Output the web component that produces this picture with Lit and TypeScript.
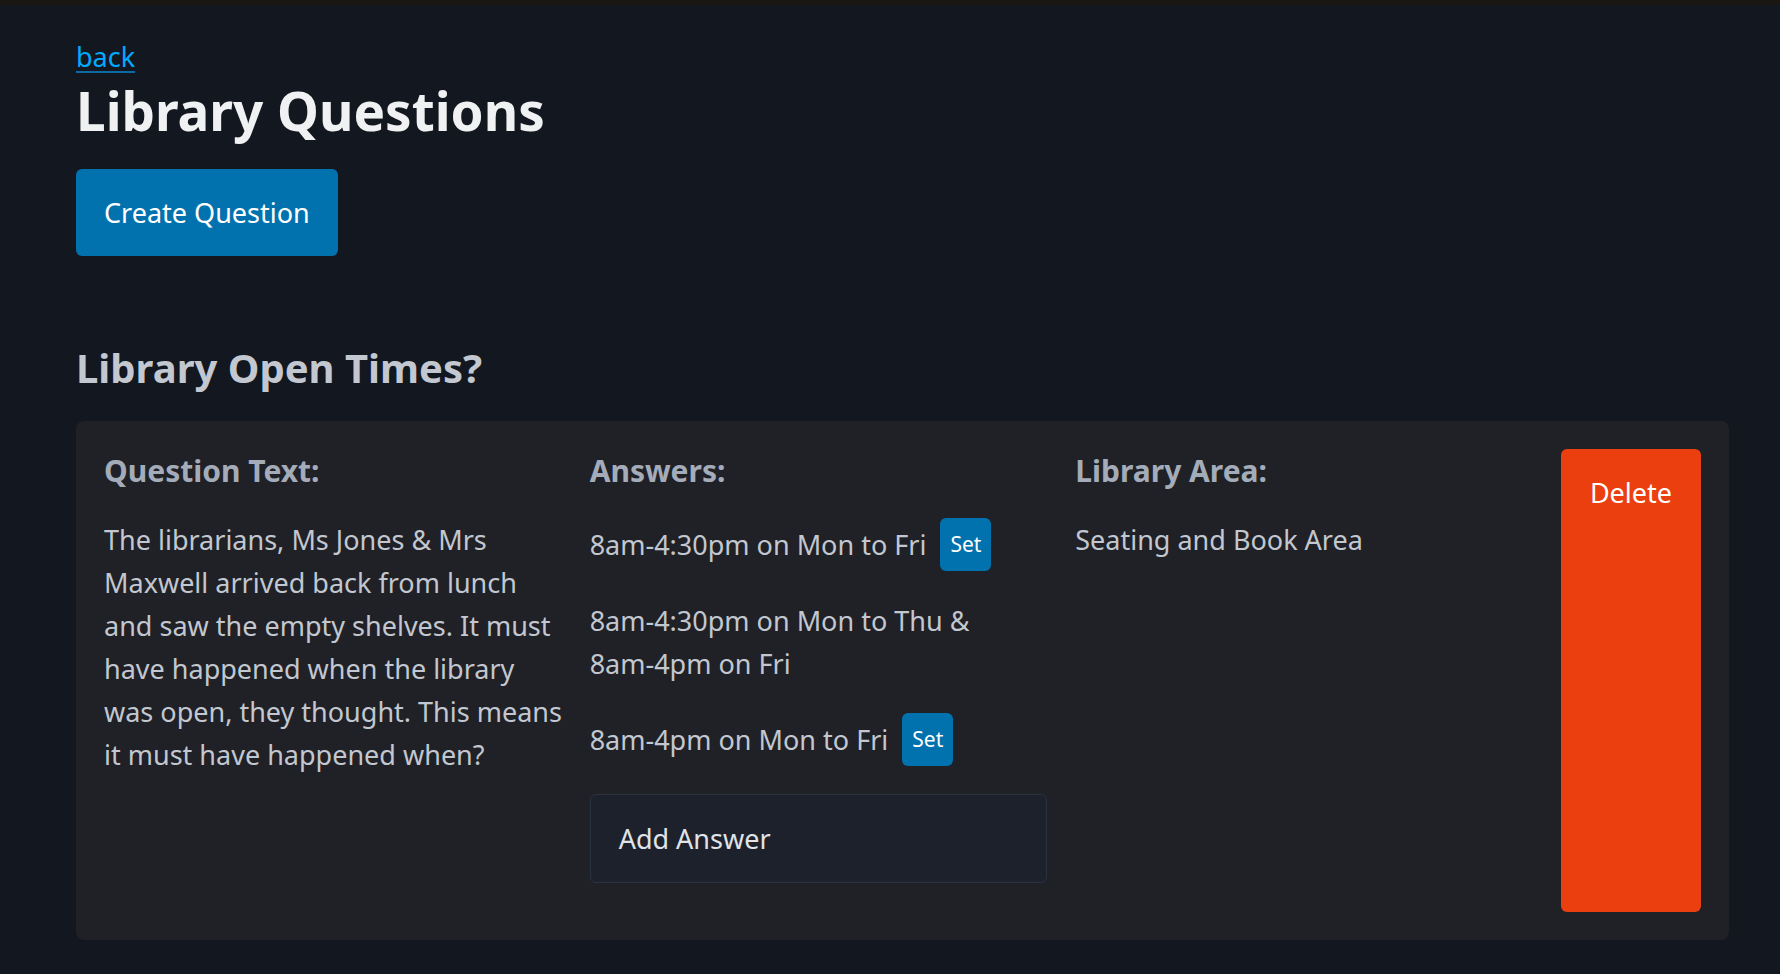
import { LitElement, html, css, nothing } from "lit";
import { customElement, property } from "lit/decorators.js";

interface Answer {
  text: string;
  canSet: boolean;
}

interface Question {
  title: string;
  text: string;
  answers: Answer[];
  area: string;
}

const questions: Question[] = [
  {
    title: "Library Open Times?",
    text: "The librarians, Ms Jones & Mrs Maxwell arrived back from lunch and saw the empty shelves. It must have happened when the library was open, they thought. This means it must have happened when?",
    answers: [
      { text: "8am-4:30pm on Mon to Fri", canSet: true },
      { text: "8am-4:30pm on Mon to Thu & 8am-4pm on Fri", canSet: false },
      { text: "8am-4pm on Mon to Fri", canSet: true },
    ],
    area: "Seating and Book Area",
  },
];

const controls = css`
  * {
    box-sizing: border-box;
    margin: 0;
  }
  button {
    border: 0;
    border-radius: 6px;
    font: inherit;
    color: #ffffff;
    background: #0172ad;
    cursor: pointer;
  }
`;

@customElement("question-card")
export class QuestionCard extends LitElement {
  static styles = [
    controls,
    css`
      :host {
        display: block;
      }
      .title {
        margin-bottom: 28px;
        font-size: 40px;
        line-height: 50px;
        font-weight: 700;
        color: #c2c7d0;
      }
      .card {
        display: grid;
        grid-template-columns: repeat(3, minmax(0, 1fr)) auto;
        gap: 28px;
        padding: 28px;
        border-radius: 8px;
        background: #202126;
      }
      .label {
        margin-bottom: 26px;
        font-size: 30px;
        line-height: 43px;
        font-weight: 700;
        color: #a4acba;
      }
      .text {
        margin-right: -4px;
      }
      .answers {
        display: flex;
        flex-direction: column;
        gap: 28px;
        margin-bottom: 28px;
        padding: 0;
        list-style: none;
      }
      .answer {
        display: flex;
        align-items: center;
        gap: 14px;
        padding-right: 14px;
      }
      .set {
        padding: 10px;
        font-size: 21px;
        line-height: 33px;
      }
      .add {
        display: block;
        width: 100%;
        margin-bottom: 29px;
        padding: 22px 28px;
        border: 1px solid #2a3140;
        text-align: left;
        color: #e0e3e7;
        background: #1c212c;
      }
      .delete {
        display: flex;
        align-items: flex-start;
        padding: 22px 29px;
        background: #eb3f10;
      }
    `,
  ];

  @property({ attribute: false }) question!: Question;

  render() {
    const q = this.question;
    return html`
      <h2 class="title">${q.title}</h2>
      <article class="card">
        <section>
          <h3 class="label">Question Text:</h3>
          <p class="text">${q.text}</p>
        </section>
        <section>
          <h3 class="label">Answers:</h3>
          <ul class="answers">
            ${q.answers.map(
              (a) => html`<li class="answer">
                <span>${a.text}</span>
                ${a.canSet ? html`<button class="set" type="button">Set</button>` : nothing}
              </li>`
            )}
          </ul>
          <button class="add" type="button">Add Answer</button>
        </section>
        <section>
          <h3 class="label">Library Area:</h3>
          <p class="text">${q.area}</p>
        </section>
        <button class="delete" type="button">Delete</button>
      </article>
    `;
  }
}

@customElement("app-root")
export class AppRoot extends LitElement {
  static styles = [
    controls,
    css`
      :host {
        display: block;
        box-sizing: border-box;
        min-height: 100vh;
        padding: 30px 51px 28px 76px;
        border-top: 5px solid #1a1612;
        font-family: "Segoe UI", "Noto Sans", "Open Sans", sans-serif;
        font-size: 27px;
        line-height: 43px;
        color: #c2c7d0;
        background: #13171f;
      }
      .back {
        color: #01aaff;
        text-decoration: underline;
        text-decoration-color: #0b6aa3;
        text-decoration-thickness: 2px;
        text-underline-offset: 4px;
      }
      .heading {
        margin-bottom: 25px;
        font-size: 53px;
        line-height: 66px;
        font-weight: 700;
        color: #f0f1f3;
      }
      .create {
        padding: 22px 28px;
      }
      .questions {
        display: grid;
        gap: 56px;
        margin-top: 87px;
      }
    `,
  ];

  render() {
    return html`
      <nav><a class="back" href="#">back</a></nav>
      <main>
        <h1 class="heading">Library Questions</h1>
        <button class="create" type="button">Create Question</button>
        <div class="questions">
          ${questions.map((q) => html`<question-card .question=${q}></question-card>`)}
        </div>
      </main>
    `;
  }
}
